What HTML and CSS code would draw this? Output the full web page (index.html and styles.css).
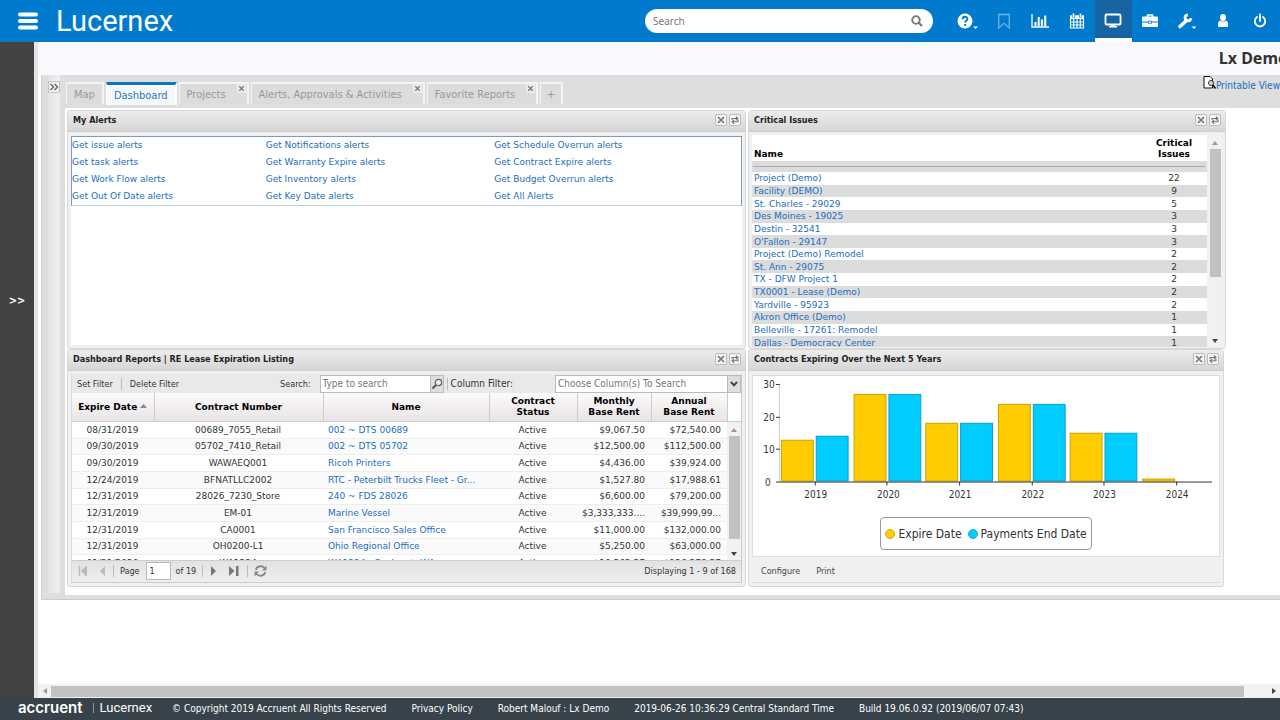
FILE: index.html
```html
<!DOCTYPE html>
<html lang="en">
<head>
<meta charset="utf-8">
<title>Lucernex - Dashboard</title>
<link rel="stylesheet" href="styles.css">
</head>
<body>
<svg class="sprite" aria-hidden="true">
  <symbol id="i-close" viewBox="0 0 12 12"><path d="M3 3L9 9M9 3L3 9" stroke="#777" stroke-width="1.700" fill="none"/></symbol>
  <symbol id="i-swap" viewBox="0 0 12 12"><path d="M3 6V4.500H8M6.800 2.500L9 4.500L6.800 6.300M9 6V7.800H4M5.200 6L3 7.800L5.200 9.800" stroke="#777" stroke-width="1.100" fill="none"/></symbol>
</svg>
<header class="topbar">
  <button class="menu" aria-label="Menu"><svg width="20" height="18" viewBox="0 0 20 18"><path d="M2 2.500H18M2 9H18M2 15.500H18" stroke="#fff" stroke-width="4" stroke-linecap="round"/></svg></button>
  <a class="brand" href="#">Lucernex</a>
  <form class="search">
    <input type="text" placeholder="Search" aria-label="Search">
    <button type="button" aria-label="Search"><svg width="12" height="12" viewBox="0 0 12 12"><circle cx="5" cy="5" r="3.800" fill="none" stroke="#777" stroke-width="1.800"/><path d="M7.800 7.800L11 11" stroke="#777" stroke-width="2.200"/></svg></button>
  </form>
  <nav class="tools">
    <button aria-label="Help"><svg width="22" height="18" viewBox="0 0 22 18"><circle cx="9" cy="9" r="7.500" fill="#fff"/><path d="M6.700 7.200C6.700 4 11.500 4.200 11.400 7C11.300 8.700 9.100 8.700 9.100 10.600M9.100 11.900V13.700" fill="none" stroke="#007acc" stroke-width="2"/><path d="M17 14.500H22L19.500 17Z" fill="#fff"/></svg></button>
    <button aria-label="Bookmarks"><svg width="14" height="16" viewBox="0 0 14 16"><path d="M1.700 1.500H12.300V15L7 10.300L1.700 15Z" fill="none" stroke="#69b4e8" stroke-width="1.300"/></svg></button>
    <button aria-label="Charts"><svg width="18" height="16" viewBox="0 0 18 16"><path d="M1 1V14H18" fill="none" stroke="#fff" stroke-width="1.300"/><path d="M4.500 13V9M7.700 13V4M10.900 13V6.500M14.200 13V2.500" stroke="#fff" stroke-width="2"/></svg></button>
    <button aria-label="Calendar"><svg width="16" height="16" viewBox="0 0 16 16"><path d="M1.500 3H14.500V15H1.500ZM1.500 9H14.500M1.500 12H14.500M4.700 6V15M8 6V15M11.300 6V15" fill="none" stroke="#fff" stroke-width="1.100"/><path d="M1 2.500H15V6H1Z" fill="#fff"/><path d="M4.500 0V4.500M11.500 0V4.500" stroke="#007acc" stroke-width="3.200"/><path d="M4.500 .5V4M11.500 .5V4" stroke="#fff" stroke-width="1.700"/></svg></button>
    <button class="on" aria-label="Dashboard"><svg width="18" height="16" viewBox="0 0 18 16"><rect x="1.500" y="1.500" width="15" height="10" rx="1" fill="none" stroke="#fff" stroke-width="1.800"/><path d="M7 11H11V13H13V14.500H5V13H7Z" fill="#fff"/></svg></button>
    <button aria-label="Portfolio"><svg width="16" height="16" viewBox="0 0 16 16"><path d="M5.500 4V2H10.500V4" fill="none" stroke="#fff" stroke-width="1.600"/><rect x="0" y="3.500" width="16" height="10.500" rx="1" fill="#fff"/><path d="M0 9H6.500M9.500 9H16" stroke="#007acc"/><path d="M6.500 8.200H9.500V10.300H6.500Z" fill="none" stroke="#007acc" stroke-width=".8"/></svg></button>
    <button aria-label="Settings"><svg width="20" height="18" viewBox="0 0 20 18"><path d="M3 14.500L9.500 8.500" stroke="#fff" stroke-width="3.600" stroke-linecap="round"/><path d="M14 6.300A3 3 0 1 1 10.800 2.800" fill="none" stroke="#fff" stroke-width="2.800"/><path d="M14.500 14.500H19.500L17 17Z" fill="#fff"/></svg></button>
    <button aria-label="Profile"><svg width="12" height="16" viewBox="0 0 12 16"><path d="M6 1C10.200 1 9.800 8 6 8.500C2.200 8 1.800 1 6 1M3 7.500Q6 10 9 7.500Q11.500 8.500 11 13Q11 14 10 14H2Q1 14 1 13Q.5 8.500 3 7.500" fill="#fff"/></svg></button>
    <button aria-label="Log out"><svg width="14" height="16" viewBox="0 0 14 16"><path d="M4 4A5.200 5.200 0 1 0 10 4M7 1.500V8" fill="none" stroke="#fff" stroke-width="1.900" stroke-linecap="round"/></svg></button>
  </nav>
</header>

<div class="shell">
  <aside class="rail"><button aria-label="Expand menu">&gt;&gt;</button></aside>
  <main class="main">
    <div class="canvas">
      <h1 class="title">Lx Demo</h1>
      <div class="board">
        <div class="strip"><button aria-label="Expand panel"><svg width="10" height="8" viewBox="0 0 10 8"><path d="M1.500 1L4.500 4L1.500 7M5.500 1L8.500 4L5.500 7" fill="none" stroke="#666" stroke-width="1.400"/></svg></button></div>
        <div class="boardmain">
          <div class="tabbar">
            <button class="tab">Map</button>
            <button class="tab active">Dashboard</button>
            <button class="tab closable">Projects<svg class="x" width="9" height="9"><use href="#i-close"/></svg></button>
            <button class="tab closable">Alerts, Approvals &amp; Activities<svg class="x" width="9" height="9"><use href="#i-close"/></svg></button>
            <button class="tab closable">Favorite Reports<svg class="x" width="9" height="9"><use href="#i-close"/></svg></button>
            <button class="tab plus">+</button>
            <a class="printable" href="#"><svg width="13" height="13" viewBox="0 0 13 13"><path d="M1 .5H7L9.500 3V12H1Z" fill="#fff" stroke="#111"/><circle cx="8" cy="7" r="2.500" fill="#bfe5dc" stroke="#333"/><path d="M9.700 9L12.500 12.500" stroke="#111" stroke-width="1.800"/></svg>Printable View</a>
          </div>
          <div class="dash">
            <div class="col">
              <section class="panel upper">
                <div class="phead"><h2>My Alerts</h2><button aria-label="Close"><svg width="12" height="12"><use href="#i-close"/></svg></button><button aria-label="Refresh"><svg width="12" height="12"><use href="#i-swap"/></svg></button></div>
                <div class="alertbody">
                  <div class="alerts">
                    <a href="#">Get issue alerts</a><a href="#">Get Notifications alerts</a><a href="#">Get Schedule Overrun alerts</a>
                    <a href="#">Get task alerts</a><a href="#">Get Warranty Expire alerts</a><a href="#">Get Contract Expire alerts</a>
                    <a href="#">Get Work Flow alerts</a><a href="#">Get Inventory alerts</a><a href="#">Get Budget Overrun alerts</a>
                    <a href="#">Get Out Of Date alerts</a><a href="#">Get Key Date alerts</a><a href="#">Get All Alerts</a>
                  </div>
                </div>
              </section>
              <section class="panel lower">
                <div class="phead"><h2>Dashboard Reports | RE Lease Expiration Listing</h2><button aria-label="Close"><svg width="12" height="12"><use href="#i-close"/></svg></button><button aria-label="Refresh"><svg width="12" height="12"><use href="#i-swap"/></svg></button></div>
                <div class="report">
                  <div class="filters">
                    <button>Set Filter</button><i class="sep"></i><button>Delete Filter</button>
                    <label class="flabel" for="q">Search:</label>
                    <input id="q" type="text" placeholder="Type to search"><button class="trigger" aria-label="Run search"><svg width="12" height="12" viewBox="0 0 12 12"><circle cx="7.500" cy="4.500" r="3.200" fill="#eee" stroke="#666" stroke-width="1.300"/><path d="M5 7L1.500 10.500" stroke="#555" stroke-width="2"/></svg></button><i class="sep"></i>
                    <label class="cflabel" for="cf">Column Filter:</label>
                    <div class="combo"><select id="cf"><option>Choose Column(s) To Search</option></select><span class="trigger"><svg width="8" height="6" viewBox="0 0 8 6"><path d="M1 1L4 4.300L7 1" fill="none" stroke="#444" stroke-width="2"/></svg></span></div>
                  </div>
                  <table class="grid ghead">
                    <colgroup><col class="c1"><col class="c2"><col><col class="c4"><col class="c5"><col class="c6"><col class="c7"></colgroup>
                    <thead><tr><th class="sorted">Expire Date <svg width="7" height="4" viewBox="0 0 7 4"><path d="M0 4L3.500 0L7 4Z" fill="#888"/></svg></th><th>Contract Number</th><th>Name</th><th>Contract<br>Status</th><th>Monthly<br>Base Rent</th><th>Annual<br>Base Rent</th><td></td></tr></thead>
                  </table>
                  <div class="gbody">
                    <table class="grid rows">
                      <colgroup><col class="c1"><col class="c2"><col><col class="c4"><col class="c5"><col class="c6"></colgroup>
                      <tbody>
                      <tr><td>08/31/2019</td><td>00689_7055_Retail</td><td><a href="#">002 ~ DTS 00689</a></td><td>Active</td><td>$9,067.50</td><td>$72,540.00</td></tr>
                      <tr><td>09/30/2019</td><td>05702_7410_Retail</td><td><a href="#">002 ~ DTS 05702</a></td><td>Active</td><td>$12,500.00</td><td>$112,500.00</td></tr>
                      <tr><td>09/30/2019</td><td>WAWAEQ001</td><td><a href="#">Ricoh Printers</a></td><td>Active</td><td>$4,436.00</td><td>$39,924.00</td></tr>
                      <tr><td>12/24/2019</td><td>BFNATLLC2002</td><td><a href="#">RTC - Peterbilt Trucks Fleet - Gr...</a></td><td>Active</td><td>$1,527.80</td><td>$17,988.61</td></tr>
                      <tr><td>12/31/2019</td><td>28026_7230_Store</td><td><a href="#">240 ~ FDS 28026</a></td><td>Active</td><td>$6,600.00</td><td>$79,200.00</td></tr>
                      <tr><td>12/31/2019</td><td>EM-01</td><td><a href="#">Marine Vessel</a></td><td>Active</td><td>$3,333,333....</td><td>$39,999,99...</td></tr>
                      <tr><td>12/31/2019</td><td>CA0001</td><td><a href="#">San Francisco Sales Office</a></td><td>Active</td><td>$11,000.00</td><td>$132,000.00</td></tr>
                      <tr><td>12/31/2019</td><td>OH0200-L1</td><td><a href="#">Ohio Regional Office</a></td><td>Active</td><td>$5,250.00</td><td>$63,000.00</td></tr>
                      <tr><td>01/31/2020</td><td>WA1234</td><td><a href="#">WA1234 - Seahurst, WA</a></td><td>Active</td><td>$10,562.57</td><td>$126,578.57</td></tr>
                      </tbody>
                    </table>
                    <div class="vbar"><i class="up"></i><b class="thumb"></b><i class="down"></i></div>
                  </div>
                  <div class="paging">
                    <button disabled aria-label="First page"><svg width="9" height="10" viewBox="0 0 9 10"><path d="M1.500 0V10M9 0V10L4 5Z" fill="#bbb" stroke="#bbb" stroke-width="1.500"/></svg></button>
                    <button disabled aria-label="Previous page"><svg width="6" height="10" viewBox="0 0 6 10"><path d="M6 0V10L1 5Z" fill="#bbb"/></svg></button>
                    <i class="sep"></i>
                    <label for="pg">Page</label><input id="pg" type="text" value="1"><span>of 19</span>
                    <i class="sep"></i>
                    <button aria-label="Next page"><svg width="6" height="10" viewBox="0 0 6 10"><path d="M0 0V10L5 5Z" fill="#777"/></svg></button>
                    <button aria-label="Last page"><svg width="10" height="10" viewBox="0 0 10 10"><path d="M0 0V10L5.500 5ZM7 0H9.500V10H7Z" fill="#777"/></svg></button>
                    <i class="sep"></i>
                    <button aria-label="Reload"><svg width="13" height="12" viewBox="0 0 13 12"><path d="M2 5C2 1 8 0 10.500 3M11 7C11 11 5 12 2.500 9" fill="none" stroke="#888" stroke-width="1.900"/><path d="M12.500 .5V5.500H8ZM.5 11.500V6.500H5Z" fill="#888"/></svg></button>
                    <span class="count">Displaying 1 - 9 of 168</span>
                  </div>
                </div>
              </section>
            </div>
            <div class="col right">
              <section class="panel upper list">
                <div class="phead"><h2>Critical Issues</h2><button aria-label="Close"><svg width="12" height="12"><use href="#i-close"/></svg></button><button aria-label="Refresh"><svg width="12" height="12"><use href="#i-swap"/></svg></button></div>
                <div class="issues">
                  <div class="issuelist">
                  <table class="ihead"><thead><tr><th>Name</th><th class="num">Critical<br>Issues</th></tr><tr class="rule"><td colspan="2"><hr></td></tr></thead></table>
                  <table class="irows"><tbody>
                    <tr><td><a href="#">Project (Demo)</a></td><td class="num">22</td></tr>
                    <tr><td><a href="#">Facility (DEMO)</a></td><td class="num">9</td></tr>
                    <tr><td><a href="#">St. Charles - 29029</a></td><td class="num">5</td></tr>
                    <tr><td><a href="#">Des Moines - 19025</a></td><td class="num">3</td></tr>
                    <tr><td><a href="#">Destin - 32541</a></td><td class="num">3</td></tr>
                    <tr><td><a href="#">O'Fallon - 29147</a></td><td class="num">3</td></tr>
                    <tr><td><a href="#">Project (Demo) Remodel</a></td><td class="num">2</td></tr>
                    <tr><td><a href="#">St. Ann - 29075</a></td><td class="num">2</td></tr>
                    <tr><td><a href="#">TX - DFW Project 1</a></td><td class="num">2</td></tr>
                    <tr><td><a href="#">TX0001 - Lease (Demo)</a></td><td class="num">2</td></tr>
                    <tr><td><a href="#">Yardville - 95923</a></td><td class="num">2</td></tr>
                    <tr><td><a href="#">Akron Office (Demo)</a></td><td class="num">1</td></tr>
                    <tr><td><a href="#">Belleville - 17261: Remodel</a></td><td class="num">1</td></tr>
                    <tr><td><a href="#">Dallas - Democracy Center</a></td><td class="num">1</td></tr>
                  </tbody></table>
                  </div>
                  <div class="vbar"><i class="up"></i><b class="thumb"></b><i class="down"></i></div>
                </div>
              </section>
              <section class="panel lower narrow">
                <div class="phead"><h2>Contracts Expiring Over the Next 5 Years</h2><button aria-label="Close"><svg width="12" height="12"><use href="#i-close"/></svg></button><button aria-label="Refresh"><svg width="12" height="12"><use href="#i-swap"/></svg></button></div>
                <div class="chartbox">
                  <svg class="chart" viewBox="0 0 468 128" role="img" aria-label="Contracts expiring by year">
                    <g class="ylab"><text x="16" y="12">30</text><text x="16" y="45">20</text><text x="16" y="77">10</text><text x="15" y="110">0</text></g>
                    <g class="gold"><rect x="28.500" y="64.500" width="32" height="41"/><rect x="101.500" y="18.500" width="32" height="87"/><rect x="173.500" y="47.500" width="32" height="58"/><rect x="246.500" y="28.500" width="32" height="77"/><rect x="318.500" y="57.500" width="32" height="48"/><rect x="391.500" y="103.500" width="32" height="2"/></g>
                    <g class="cyan"><rect x="63.500" y="60.500" width="32" height="45"/><rect x="136.500" y="18.500" width="32" height="87"/><rect x="208.500" y="47.500" width="32" height="58"/><rect x="281.500" y="28.500" width="32" height="77"/><rect x="353.500" y="57.500" width="32" height="48"/></g>
                    <path d="M26.500 8V106" stroke="#ccc"/>
                    <path d="M23 8.500H27M23 41.500H27M23 73.500H27M23 106.500H461M62.500 106V110M134.500 106V110M207.500 106V110M280.500 106V110M352.500 106V110M425.500 106V110" stroke="#333" fill="none"/>
                    <g class="xlab"><text x="63" y="123">2019</text><text x="136" y="123">2020</text><text x="208" y="123">2021</text><text x="281" y="123">2022</text><text x="353" y="123">2023</text><text x="426" y="123">2024</text></g>
                  </svg>
                  <div class="legend"><i class="dot gold"></i><span>Expire Date</span><i class="dot cyan"></i><span>Payments End Date</span></div>
                </div>
                <div class="chartfoot"><button>Configure</button><button>Print</button></div>
              </section>
            </div>
          </div>
        </div>
      </div>
    </div>
    <div class="hbar"><i class="left"></i><b class="thumb"></b><i class="rightarrow"></i></div>
  </main>
</div>
<footer class="footer">
  <span class="acc">accruent</span><i class="bar"></i><span class="luc">Lucernex</span>
  <span>© Copyright 2019 Accruent All Rights Reserved</span>
  <a href="#">Privacy Policy</a><span>Robert Malouf : Lx Demo</span><span>2019-06-26 10:36:29 Central Standard Time</span><span>Build 19.06.0.92 (2019/06/07 07:43)</span>
</footer>
</body>
</html>
```
FILE: styles.css
```css
* { box-sizing: border-box; }
body {
  margin: 0; height: 100vh; display: flex; flex-direction: column; overflow: hidden;
  font-family: "DejaVu Sans Condensed", "Noto Sans", sans-serif; font-size: 10px; color: #333; background: #fff;
}
button, input, select { font: inherit; color: inherit; margin: 0; padding: 0; border: 0; background: none; }
button { display: inline-flex; align-items: center; justify-content: center; flex: none; }
svg { display: block; flex: none; }
a { color: #1b6ec2; text-decoration: none; }
h1, h2 { margin: 0; }
.sprite { position: absolute; width: 0; height: 0; }

.topbar { height: 42px; flex: none; display: flex; align-items: center; background: #007acc; padding: 0 2px 0 18px; }
.menu { width: 20px; }
.brand { margin-left: 18px; color: #fff; font-family: Roboto, sans-serif; font-size: 29px; line-height: 42px; }
.search { margin-left: auto; width: 288px; height: 24px; display: flex; align-items: center; background: #fff; border-radius: 12px; padding: 0 10px 0 8px; }
.search input { flex: 1; min-width: 0; font-size: 10px; font-family: "Noto Sans", sans-serif; outline: 0; }
.search input::placeholder { color: #777; opacity: 1; }
.tools { margin-left: 16px; width: 329px; height: 42px; display: grid; grid-template-columns: repeat(9, 1fr); }
.tools .on { background: #1764a3; border-bottom: 4px solid #fff; padding-top: 4px; }

.shell { flex: 1; min-height: 0; display: flex; }
.rail { width: 34px; flex: none; background: #424242; display: flex; align-items: center; justify-content: center; padding-bottom: 140px; }
.rail button { color: #fff; font-size: 11px; font-weight: bold; }
.main { flex: 1; min-width: 0; display: flex; flex-direction: column; border-left: 4px solid #e4e4e4; overflow: hidden; }
.canvas { flex: 1; width: calc(100% + 8px); background: #fff; }
.title { background: #f7f9fc; text-align: right; font: bold 16px/33px "Noto Sans", sans-serif; color: #333; }
.board { margin-left: 3px; background: #dedede; display: flex; padding: 0 0 6px 6px; border-bottom: 1px solid #ccc; border-left: 1px solid #d4d4d4; height: 525px; }
.strip { width: 12px; background: linear-gradient(90deg, #e4e4e4, #f0f0f0); margin-right: 5px; padding-top: 6px; flex: none; }
.strip button { width: 12px; height: 12px; background: #f4f4f4; border: 1px solid #c4c4c4; }
.boardmain { flex: 1; min-width: 0; display: flex; flex-direction: column; }
.tabbar { height: 33px; flex: none; display: flex; gap: 2px; padding: 7px 8px 0 1px; }
.tab { height: 22px; font-size: 11px; color: #999; padding: 0 7px; border: 2px solid #f4f4f4; border-bottom: 0; border-left-width: 1px; background: #dcdcdc; position: relative; }
.tab.active { background: #f8f8f8; color: #1b7ac8; border-top: 3px solid #1273bd; height: 23px; border-color: #1273bd #fff #fff; }
.tab.closable { padding-right: 21px; }
.x { position: absolute; top: 0; right: 1px; background: #ececec; }
.tab.plus { width: 23px; }
.printable { margin-left: auto; display: flex; height: 20px; align-items: flex-start; line-height: 20px; margin-top: -6px; }
.dash { flex: 1; background: #fff; padding: 2px 62px 8px 2px; display: flex; gap: 2px; }
.col { flex: 679 1 0; min-width: 0; display: flex; flex-direction: column; }
.col.right { flex-grow: 478; }
.panel { background: #f0f0f0; border: 1px solid #d8d8d8; border-radius: 3px; padding: 0 3px 3px; display: flex; flex-direction: column; font-size: 9px; }
.upper { height: 239px; }
.list { padding-bottom: 1px; }
.lower { height: 238px; }
.narrow { margin-right: 2px; }
.phead { height: 21px; flex: none; margin: 0 -3px; padding: 0 4px 2px 5px; display: flex; align-items: center; gap: 2px; background: linear-gradient(#ececec, #d6d6d6); border-bottom: 1px solid #ccc; }
.phead h2 { flex: 1; font-size: 9px; color: #222; }
.phead button { width: 12px; height: 12px; background: #f6f6f6; border: 1px solid #bbb; border-radius: 2px; }

.alertbody { flex: 1; background: #fff; margin-top: 4px; font-family: "DejaVu Sans", sans-serif; }
.alerts { height: 70px; display: grid; grid-template-columns: 194fr 229fr 247fr; grid-auto-rows: 1fr; border: 1px solid #7e9cb9; border-bottom-color: #b9cfe4; line-height: 16px; }

.report { flex: 1; min-height: 0; margin-top: 3px; display: flex; flex-direction: column; border: 1px solid #ccc; border-top: 0; border-left-color: #ddd; }
.filters { height: 19px; flex: none; display: flex; align-items: center; background: #e9e9e9; padding-left: 5px; }
.sep { width: 1px; height: 12px; background: #bbb; margin: 0 8px; }
.filters .sep:nth-of-type(2) { margin: 0 3px; }
.flabel { margin-left: auto; margin-right: 9px; }
.cflabel, .filters input, .combo select { font-size: 10px; }
.filters input { width: 111px; height: 18px; background: #fff; border: 1px solid #bbb; padding: 0 2px; outline: 0; }
.filters input::placeholder { color: #777; opacity: 1; }
.trigger { width: 13px; height: 18px; background: #dedede; border: 1px solid #bbb; border-left: 0; display: flex; align-items: center; justify-content: center; }
.combo { display: flex; width: 186px; margin: 0 0 0 42px; }
.combo select { flex: 1; min-width: 0; height: 18px; appearance: none; background: #fff; border: 1px solid #bbb; padding: 0 2px; color: #777; }
table { border-collapse: collapse; width: 100%; }
.grid { table-layout: fixed; font-family: "DejaVu Sans", sans-serif; }
.c1 { width: 82px; } .c2 { width: 169px; } .c4 { width: 88px; } .c5 { width: 74px; } .c6 { width: 76px; } .c7 { width: 14px; }
.ghead { flex: none; height: 29px; }
.ghead th { padding: 0; line-height: 11px; color: #000; background: linear-gradient(#fbf9fa, #e9e5e7); border-right: 1px solid #ccc; border-bottom: 1px solid #ccc; }
.ghead td { background: #fff; border-bottom: 1px solid #ccc; }
.ghead svg { display: inline-block; vertical-align: 2px; }
.gbody { flex: 1; min-height: 0; overflow: hidden; display: flex; align-items: flex-start; background: #fff; }
.rows { flex: 1; min-width: 0; height: 150px; }
.rows td { padding: 0 6px 0 5px; line-height: 14px; text-align: center; white-space: nowrap; overflow: hidden; border-bottom: 1px solid #eee; }
.rows td:nth-child(3) { text-align: left; }
.rows td:nth-child(n+5) { text-align: right; padding-left: 0; }
.rows tr:nth-child(even) { background: #fafafa; }
.vbar { width: 14px; align-self: stretch; flex: none; display: flex; flex-direction: column; align-items: center; background: #f1f1f1; padding: 6px 1px 4px; }
.vbar .thumb { width: 11px; background: #c1c1c1; margin: 4px 0 auto; height: 103px; }
.up, .down, .left, .rightarrow { border: 3px solid transparent; flex: none; }
.up { border-top: 0; border-bottom: 4px solid #999; }
.down { border-bottom: 0; border-top: 4px solid #444; }
.paging { height: 22px; flex: none; display: flex; align-items: center; background: linear-gradient(#e2e2e2, #efefef); border-top: 1px solid #ccc; padding: 0 5px 2px 6px; }
.paging button { margin-right: 12px; }
.paging button + .sep { margin-left: -4px; margin-right: 6px; }
.paging input { width: 25px; height: 18px; background: #fff; border: 1px solid #bbb; padding: 0 3px; margin: 0 5px 0 6px; }
.paging .sep { margin: 0 8px 0 6px; }
.count { margin-left: auto; }

.issues { flex: 1; min-height: 0; display: flex; margin-top: 3px; font-family: "DejaVu Sans", sans-serif; overflow: hidden; }
.issuelist { flex: 1; min-width: 0; }
.issues .vbar { margin-left: 1px; padding-top: 6px; }
.issues .thumb { height: 128px; }
.ihead { background: #fff; color: #000; }
.ihead th { height: 26px; padding: 0 0 1px 2px; line-height: 11px; text-align: left; vertical-align: bottom; }
.ihead .num, .irows .num { width: 68px; text-align: center; }
.rule td { background: #dcdcdc; height: 11px; padding: 0 2px 0 1px; }
.rule hr { margin: 0; border: 0; border-top: 1px solid #aaa; }
.irows { height: 177px; background: #fff; }
.irows td { padding: 0 0 0 2px; line-height: 12px; }
.irows tr:nth-child(even) { background: #dcdcdc; }

.chartbox { flex: 1; margin-top: 4px; background: #fff; border: 1px solid #ddd; }
.chart { width: 100%; }
.chart text { font-size: 10px; fill: #333; text-anchor: middle; }
.gold rect { fill: #fc0; stroke: #c9a100; }
.cyan rect { fill: #0cf; stroke: #0aa0c8; }
.legend { width: 212px; height: 33px; margin: 14px auto 0; border: 1px solid #999; border-radius: 4px; display: flex; align-items: center; justify-content: center; font-size: 12px; }
.dot { width: 10px; height: 10px; border-radius: 50%; margin-right: 3px; flex: none; }
.dot.gold { background: #fc0; border: 1px solid #d4aa00; }
.dot.cyan { background: #0cf; border: 1px solid #0ab0dc; margin-left: 6px; }
.chartfoot { height: 26px; flex: none; display: flex; gap: 16px; padding: 2px 0 0 9px; border-bottom: 1px solid #ddd; color: #444; }

.hbar { height: 14px; flex: none; display: flex; align-items: center; background: #f1f1f1; padding: 0 4px 0 2px; }
.hbar .thumb { flex: 1; height: 11px; background: #c1c1c1; margin: 0 28px 0 4px; }
.left { border-left: 0; border-right: 4px solid #999; margin-left: 3px; }
.rightarrow { border-right: 0; border-left: 4px solid #444; }
.footer { height: 22px; flex: none; display: flex; align-items: center; gap: 25px; background: #37424b; color: #fff; padding: 0 18px 2px; white-space: nowrap; }
.footer a { color: #fff; }
.acc { font: 600 15px/20px Inter, sans-serif; }
.bar { width: 1px; height: 10px; background: #8b949a; margin: 0 -19px 0 -15px; }
.luc { font: 13px/20px Roboto, sans-serif; margin-right: -5px; }
```
